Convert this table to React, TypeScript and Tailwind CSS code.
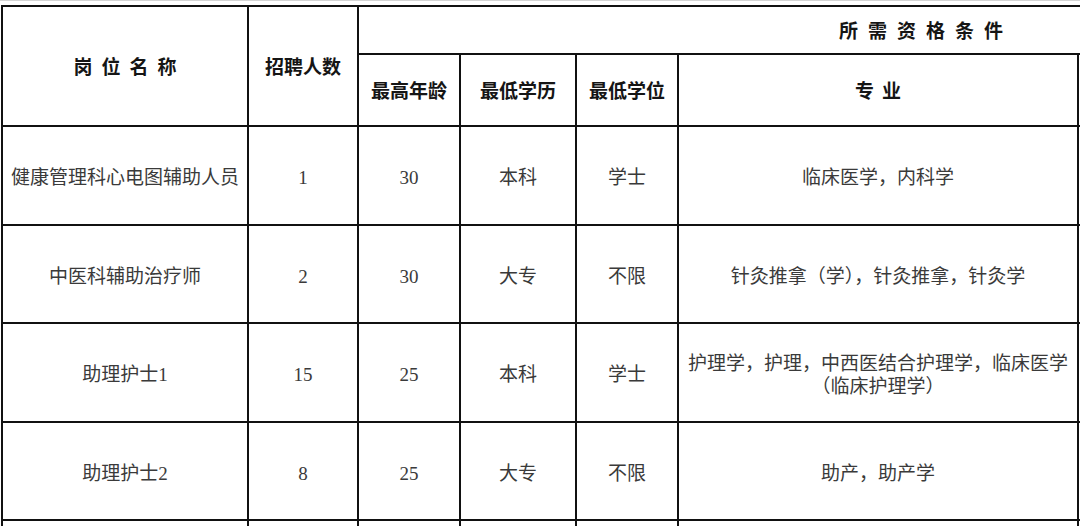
const rows = [
  { name: "健康管理科心电图辅助人员", count: "1", age: "30", edu: "本科", degree: "学士", major: ["临床医学，内科学"] },
  { name: "中医科辅助治疗师", count: "2", age: "30", edu: "大专", degree: "不限", major: ["针灸推拿（学），针灸推拿，针灸学"] },
  { name: "助理护士1", count: "15", age: "25", edu: "本科", degree: "学士", major: ["护理学，护理，中西医结合护理学，临床医学", "（临床护理学）"] },
  { name: "助理护士2", count: "8", age: "25", edu: "大专", degree: "不限", major: ["助产，助产学"] },
];

const head = "flex items-center justify-center bg-white pt-[5px] text-[19px] font-bold text-[#151515]";
const cell = "flex items-center justify-center bg-white pt-[4px] text-center text-[19px] leading-[23px] text-[#3a3a3a]";

function Spaced({ text, gap }: { text: string; gap: string }) {
  return (
    <span className={`flex ${gap}`}>
      {text.split("").map((ch, i) => (
        <span key={i}>{ch}</span>
      ))}
    </span>
  );
}

export default function App() {
  return (
    <div
      className="h-[526px] w-[1080px] overflow-hidden bg-white"
      style={{ fontFamily: '"Liberation Serif", "Noto Sans CJK SC", serif' }}
    >
      <div className="h-px bg-[#d4d4d4]" />
      <div className="h-[4px]" />
      <div className="ml-px grid w-[1484px] grid-cols-[244px_108px_100px_114px_100px_398px_1fr] grid-rows-[46px_70px_97px_96px_97px_96px_100px] gap-[2px] bg-[#111] p-[2px]">
        {/* header */}
        <div className={`${head} row-span-2`}>
          <Spaced text="岗位名称" gap="gap-[9px]" />
        </div>
        <div className={`${head} row-span-2`}>招聘人数</div>
        <div className={`${head} col-span-5`}>
          <Spaced text="所需资格条件" gap="gap-[10px]" />
        </div>
        <div className={head}>最高年龄</div>
        <div className={head}>最低学历</div>
        <div className={head}>最低学位</div>
        <div className={head}>
          <Spaced text="专业" gap="gap-[8px]" />
        </div>
        <div className="bg-white" />

        {/* body */}
        {rows.map((r) => (
          <div key={r.name} className="contents">
            <div className={cell}>{r.name}</div>
            <div className={cell}>{r.count}</div>
            <div className={cell}>{r.age}</div>
            <div className={cell}>{r.edu}</div>
            <div className={cell}>{r.degree}</div>
            <div className={`${cell} flex-col`}>
              {r.major.map((m) => (
                <span key={m}>{m}</span>
              ))}
            </div>
            <div className="bg-white" />
          </div>
        ))}

        {/* next row, cut off by the page edge */}
        {Array.from({ length: 7 }).map((_, i) => (
          <div key={i} className="bg-white" />
        ))}
      </div>
    </div>
  );
}
